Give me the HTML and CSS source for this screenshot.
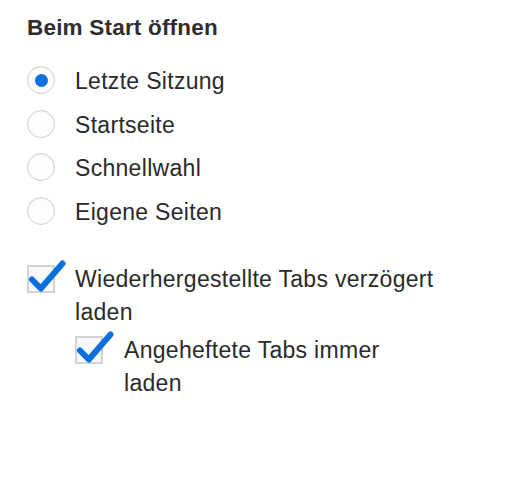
FILE: index.html
```html
<!DOCTYPE html>
<html lang="de">
<head>
<meta charset="utf-8">
<title>Beim Start öffnen</title>
<link rel="stylesheet" href="styles.css">
</head>
<body>
<section class="panel">
  <h2 class="title">Beim Start öffnen</h2>
  <div class="radios">
    <label class="radio-row"><span class="radio checked"></span><span class="text">Letzte Sitzung</span></label>
    <label class="radio-row"><span class="radio"></span><span class="text">Startseite</span></label>
    <label class="radio-row"><span class="radio"></span><span class="text">Schnellwahl</span></label>
    <label class="radio-row"><span class="radio"></span><span class="text">Eigene Seiten</span></label>
  </div>
  <div class="check-row">
    <span class="box"><svg class="tick" viewBox="0 0 28 28" width="28" height="28"><path d="M5 14.5 L13.8 23.5 L35.5 -1.5"/></svg></span>
    <div class="check-body">
      <div class="text">Wiederhergestellte Tabs verzögert laden</div>
      <div class="check-row nested">
        <span class="box"><svg class="tick" viewBox="0 0 28 28" width="28" height="28"><path d="M5 14.5 L13.8 23.5 L35.5 -1.5"/></svg></span>
        <div class="check-body">
          <div class="text">Angeheftete Tabs immer laden</div>
        </div>
      </div>
    </div>
  </div>
</section>
</body>
</html>
```
FILE: styles.css
```css
html, body {
  margin: 0;
  padding: 0;
  background: #ffffff;
}
body {
  font-family: "Liberation Sans", Arial, sans-serif;
  color: #2a2a2a;
}
.panel {
  width: 412px;
  padding: 15px 0 0 27px;
}
.title {
  margin: 0;
  font-size: 22.5px;
  line-height: 26px;
  font-weight: bold;
  letter-spacing: 0.2px;
  color: #2e2e2e;
}
.radios {
  display: flex;
  flex-direction: column;
  gap: 15.5px;
  margin-top: 25px;
}
.radio-row {
  display: flex;
  align-items: center;
  gap: 20px;
  height: 28px;
}
.text {
  font-size: 23px;
  line-height: 33px;
  letter-spacing: 0.3px;
}
.radio-row .text {
  line-height: 28px;
  position: relative;
  top: 1px;
}
.radio {
  box-sizing: border-box;
  width: 28px;
  height: 28px;
  border-radius: 50%;
  border: 1.5px solid #cfcfcf;
  background: #fdfdfd;
  box-shadow: inset 0 1px 2px rgba(0,0,0,0.06);
  display: flex;
  align-items: center;
  justify-content: center;
  flex: none;
}
.radio.checked::after {
  content: "";
  width: 13px;
  height: 13px;
  border-radius: 50%;
  background: #0b6fdc;
}
.check-row {
  display: flex;
  align-items: flex-start;
  gap: 20px;
  margin-top: 38px;
}
.check-row.nested {
  gap: 21px;
  margin-top: 5px;
}
.box {
  position: relative;
  box-sizing: border-box;
  width: 28px;
  height: 28px;
  margin-top: 2px;
  border: 2px solid #d2d2d2;
  background: #f8f8f8;
  flex: none;
}
.tick {
  position: absolute;
  left: -2px;
  top: -2px;
  overflow: visible;
}
.tick path {
  fill: none;
  stroke: #0b6fdc;
  stroke-width: 6;
  stroke-linecap: round;
  stroke-linejoin: round;
}
.check-body {
  flex: 1;
  min-width: 0;
}
```
